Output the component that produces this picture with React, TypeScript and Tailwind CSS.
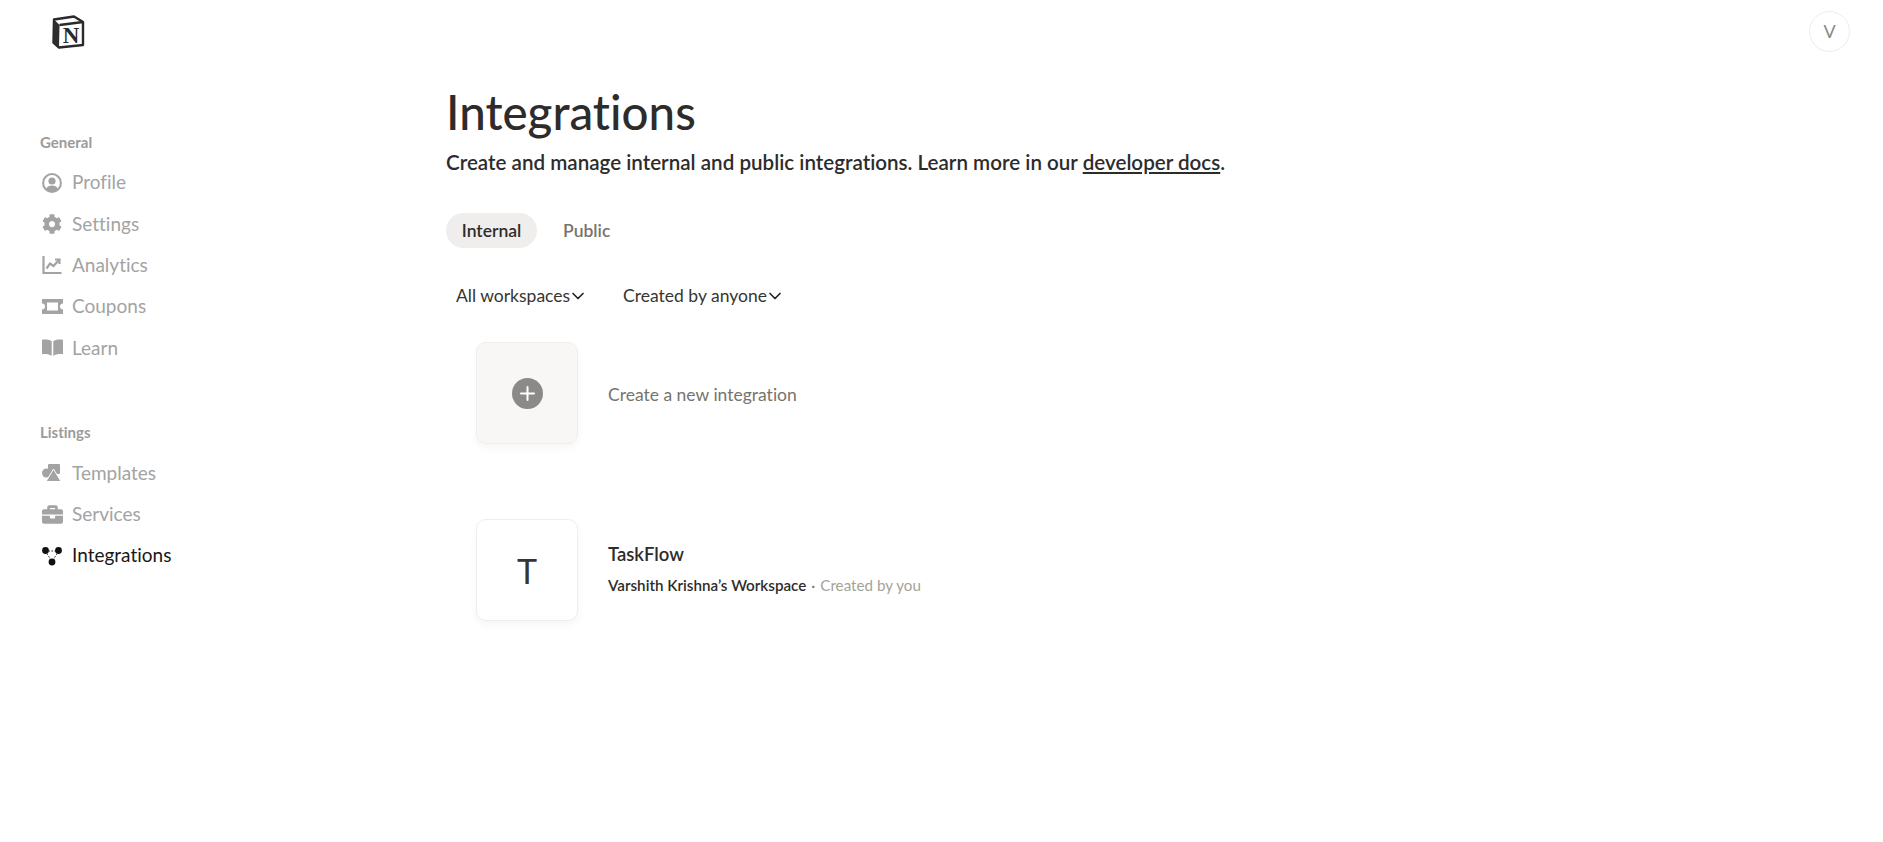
import { ChevronDown } from "lucide-react";
import { FaBriefcase, FaCog } from "react-icons/fa";
import type { ReactNode } from "react";

function NotionLogo() {
  return (
    <svg width="33" height="34" viewBox="0 0 33 34" className="block">
      <path d="M2 4.5 L22 1.5 L31 7 L31 30 L7 32.5 L1.5 27.5 Z" fill="#fff" stroke="#2b2a2a" strokeWidth="2.4" strokeLinejoin="round" />
      <path d="M2 4.5 L7.5 10 L7 32.5 L1.5 27.5 Z" fill="#2f2d2d" />
      <path d="M7.5 10 L31 7" stroke="#2b2a2a" strokeWidth="2.4" fill="none" />
      <text x="19" y="27.5" textAnchor="middle" fontFamily="'Liberation Serif', serif" fontWeight="700" fontSize="23" fill="#2b2a2a">N</text>
    </svg>
  );
}

function ProfileIcon() {
  return (
    <svg width="20" height="20" viewBox="0 0 20 20">
      <circle cx="10" cy="10" r="8.9" fill="none" stroke="currentColor" strokeWidth="2" />
      <circle cx="10" cy="8" r="3.6" fill="currentColor" />
      <path d="M3.8 16.2c1.2-2.6 3.4-3.6 6.2-3.6s5 1 6.2 3.6c-1.6 1.7-3.8 2.8-6.2 2.8s-4.6-1.1-6.2-2.8z" fill="currentColor" />
    </svg>
  );
}

function ChartIcon() {
  return (
    <svg width="20" height="20" viewBox="0 0 20 20" fill="none" stroke="currentColor" strokeWidth="2.2">
      <path d="M1.5 1v17h18" />
      <path d="M4.5 13.5 L8 8.5 L11.5 11 L17 5" />
      <path d="M13 4.5h4.5v4.5" />
    </svg>
  );
}

function CouponIcon() {
  return (
    <svg width="21" height="15" viewBox="0 0 21 15">
      <path fillRule="evenodd" fill="currentColor" d="M0 0h21v4.5a3 3 0 0 0 0 6V15H0v-4.5a3 3 0 0 0 0-6zM5 3.5v8h11v-8z" />
    </svg>
  );
}

function BookIcon() {
  return (
    <svg width="21" height="18" viewBox="0 0 21 18" fill="currentColor">
      <path d="M9.7 2.2C8 .8 4.5.3 0 .8v14.4c4-.3 7.5.1 9.7 1.8z" />
      <path d="M11.3 2.2C13 .8 16.5.3 21 .8v14.4c-4-.3-7.5.1-9.7 1.8z" />
    </svg>
  );
}

function TemplatesIcon() {
  return (
    <svg width="20" height="18" viewBox="0 0 20 18" fill="currentColor">
      <rect x="6" y="0" width="12" height="10" rx="1" />
      <circle cx="4.5" cy="9" r="4.5" />
      <path d="M11.5 5 L19 17.5 H4 Z" stroke="#fff" strokeWidth="1" />
    </svg>
  );
}

function NodesIcon() {
  return (
    <svg width="20" height="20" viewBox="0 0 20 20">
      <path d="M3.5 5h13M3.5 5L10 16M16.5 5L10 16" stroke="#222" strokeWidth="1" strokeDasharray="1.5 1.5" fill="none" />
      <circle cx="3.5" cy="4.5" r="3.4" fill="#111" />
      <circle cx="16.5" cy="4.5" r="3.4" fill="#111" />
      <circle cx="10" cy="16" r="3.4" fill="#111" />
    </svg>
  );
}

function NavItem({ icon, label, active }: { icon: ReactNode; label: string; active?: boolean }) {
  return (
    <a className={`flex h-[41.3px] items-center text-[19px] ${active ? "text-[#1a1717]" : "text-[#a3a3a3]"}`}>
      <span className="flex w-[32px] shrink-0 items-center pl-[2px]">{icon}</span>
      {label}
    </a>
  );
}

function NavHeading({ children }: { children: ReactNode }) {
  return <div className="mb-[9px] h-[22px] text-[15px] leading-[22px] font-bold text-[#9b9b9b]">{children}</div>;
}

function Filter({ label }: { label: string }) {
  return (
    <button className="flex items-center text-[17.5px] text-[#37352f]">
      {label}
      <ChevronDown size={20} strokeWidth={2} className="-ml-[2px] text-[#222]" />
    </button>
  );
}

export default function App() {
  return (
    <div className="min-h-screen bg-white font-['Lato','Liberation_Sans',sans-serif] [font-variant-ligatures:none]">
      <header className="flex h-[62px] items-start justify-between pt-[15px] pr-[33px] pl-[52px]">
        <NotionLogo />
        <div className="-mt-[4px] flex h-[41px] w-[41px] items-center justify-center rounded-full border border-[#ececec] text-[18px] text-[#8a8a85]">
          V
        </div>
      </header>

      <div className="flex">
        <aside className="w-[446px] shrink-0 pt-[69px] pl-[40px]">
          <NavHeading>General</NavHeading>
          <NavItem icon={<ProfileIcon />} label="Profile" />
          <NavItem icon={<FaCog size={20} />} label="Settings" />
          <NavItem icon={<ChartIcon />} label="Analytics" />
          <NavItem icon={<CouponIcon />} label="Coupons" />
          <NavItem icon={<BookIcon />} label="Learn" />

          <div className="h-[53px]" />
          <NavHeading>Listings</NavHeading>
          <NavItem icon={<TemplatesIcon />} label="Templates" />
          <NavItem icon={<FaBriefcase size={21} />} label="Services" />
          <NavItem icon={<NodesIcon />} label="Integrations" active />
        </aside>

        <main className="min-w-0 flex-1 pt-[22px]">
          <h1 className="text-[47.5px] leading-[56px] font-medium text-[#2e2c2b]">Integrations</h1>
          <p className="mt-[7px] text-[20.6px] leading-[30px] font-semibold text-[#2e2c2b]">
            Create and manage internal and public integrations. Learn more in our{" "}
            <a className="underline">developer docs</a>.
          </p>

          <div className="mt-[36px] flex items-center gap-[10px] text-[17.5px] font-semibold">
            <span className="flex h-[35px] w-[91px] items-center justify-center rounded-full bg-[#efeeec] pt-[1px] text-[#2e2c2b]">
              Internal
            </span>
            <span className="px-[16px] pt-[1px] text-[#77736d]">Public</span>
          </div>

          <div className="mt-[35px] flex h-[26px] items-center gap-[35px] pl-[10px]">
            <Filter label="All workspaces" />
            <Filter label="Created by anyone" />
          </div>

          <div className="mt-[33px] flex items-center gap-[30px] pl-[30px]">
            <div className="flex h-[102px] w-[102px] items-center justify-center rounded-[10px] border border-[#efeeec] bg-[#f8f7f5] shadow-[0_4px_8px_rgba(0,0,0,0.04)]">
              <span className="flex h-[31px] w-[31px] items-center justify-center rounded-full bg-[#8b8a88]">
                <svg width="17" height="17" viewBox="0 0 17 17" stroke="#fff" strokeWidth="2" strokeLinecap="round">
                  <path d="M8.5 2v13M2 8.5h13" />
                </svg>
              </span>
            </div>
            <span className="mt-[4px] text-[17.5px] text-[#77736d]">Create a new integration</span>
          </div>

          <div className="mt-[75px] flex items-center gap-[30px] pl-[30px]">
            <div className="flex h-[102px] w-[102px] items-center justify-center rounded-[10px] border border-[#efeeec] bg-white text-[34px] text-[#37352f] shadow-[0_4px_8px_rgba(0,0,0,0.04)]">
              T
            </div>
            <div className="mt-[-3px]">
              <div className="text-[18.5px] leading-[26px] font-semibold text-[#2e2c2b]">TaskFlow</div>
              <div className="mt-[7px] text-[15.2px] leading-[22px] text-[#2e2c2b]">
                <span className="font-semibold">Varshith Krishna’s Workspace</span>
                <span className="px-[5px] text-[#77736d]">·</span>
                <span className="text-[#a3a398]">Created by you</span>
              </div>
            </div>
          </div>
        </main>
      </div>
    </div>
  );
}
